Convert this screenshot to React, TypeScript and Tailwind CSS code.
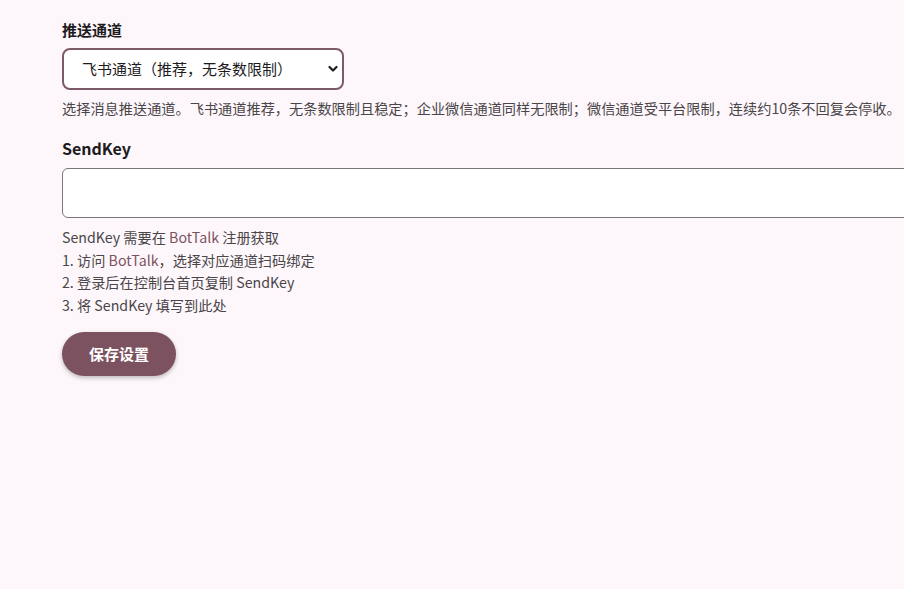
import React from "react";

export default function App() {
  return (
    <div
      className="min-h-[589px] w-full bg-[#fdf7fb] overflow-hidden text-[#1d1b1e]"
      style={{ fontFamily: '"Noto Sans CJK SC", "Noto Sans", sans-serif' }}
    >
      <div className="pl-[62px] pt-[19px]">
        <div className="text-[15px] font-bold leading-[22px]">推送通道</div>
        <div className="relative mt-[7px] w-[282px]">
          <select
            defaultValue="feishu"
            className="h-[42px] w-full appearance-none rounded-[8px] border-2 border-[#7d5a68] bg-white pl-[18px] pr-[36px] text-[15px] text-[#1d1b1e] outline-none"
            style={{ fontFamily: '"Noto Sans CJK SC", sans-serif' }}
          >
            <option value="feishu">飞书通道（推荐，无条数限制）</option>
            <option value="wecom">企业微信通道</option>
            <option value="wechat">微信通道</option>
          </select>
          <svg
            className="pointer-events-none absolute right-[5px] top-[16px]"
            width="12"
            height="10"
            viewBox="0 0 12 10"
          >
            <path d="M2.5 3 L6 6.5 L9.5 3" fill="none" stroke="#1d1b1e" strokeWidth="2.2" strokeLinecap="round" strokeLinejoin="round" />
          </svg>
        </div>
        <div className="mt-[8px] whitespace-nowrap text-[14.2px] leading-[20px] text-[#4a4548]">
          选择消息推送通道。飞书通道推荐，无条数限制且稳定；企业微信通道同样无限制；微信通道受平台限制，连续约10条不回复会停收。
        </div>

        <div className="mt-[19px] text-[16px] font-bold leading-[22px]">SendKey</div>
        <input
          type="text"
          className="mt-[9px] block h-[50px] w-[900px] rounded-[6px] border border-[#7a7579] bg-white px-4 outline-none"
        />
        <div className="mt-[8px] text-[14.2px] leading-[22.5px] text-[#4a4548]">
          <div>
            SendKey 需要在 <span className="text-[#7d5260]">BotTalk</span> 注册获取
          </div>
          <div>
            1. 访问 <span className="text-[#7d5260]">BotTalk</span>，选择对应通道扫码绑定
          </div>
          <div>2. 登录后在控制台首页复制 SendKey</div>
          <div>3. 将 SendKey 填写到此处</div>
        </div>
        <button className="mt-[16px] h-[44px] w-[114px] rounded-full bg-[#7d5260] text-[15px] font-bold text-white shadow-[0_2px_4px_rgba(0,0,0,0.25)]">
          保存设置
        </button>
      </div>
    </div>
  );
}
